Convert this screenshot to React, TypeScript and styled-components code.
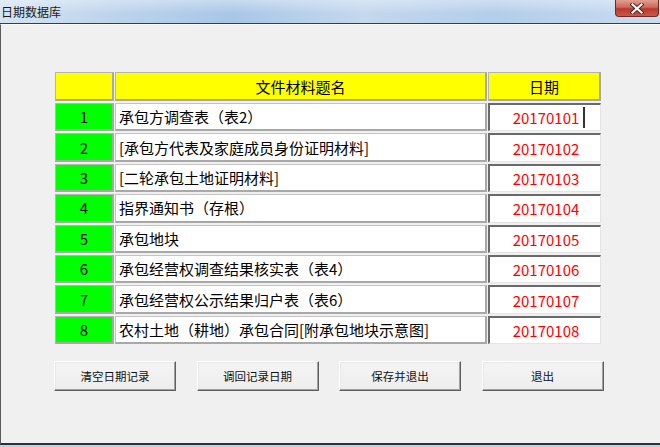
import React from 'react'
import styled, { createGlobalStyle } from 'styled-components'

const GlobalStyle = createGlobalStyle`
  html, body {
    margin: 0;
    padding: 0;
    background: #f0f0f0;
    overflow: hidden;
  }
  body {
    font-family: "Noto Sans CJK SC", "Noto Sans", sans-serif;
  }
`

const rows = [
  { no: 1, name: '承包方调查表（表2）', date: '20170101' },
  { no: 2, name: '[承包方代表及家庭成员身份证明材料]', date: '20170102' },
  { no: 3, name: '[二轮承包土地证明材料]', date: '20170103' },
  { no: 4, name: '指界通知书（存根）', date: '20170104' },
  { no: 5, name: '承包地块', date: '20170105' },
  { no: 6, name: '承包经营权调查结果核实表（表4）', date: '20170106' },
  { no: 7, name: '承包经营权公示结果归户表（表6）', date: '20170107' },
  { no: 8, name: '农村土地（耕地）承包合同[附承包地块示意图]', date: '20170108' },
]

const buttons = ['清空日期记录', '调回记录日期', '保存并退出', '退出']

export default function App() {
  return (
    <>
      <GlobalStyle />
      <Window>
        <TitleBar>
          <Title>日期数据库</Title>
          <CloseButton>
            <svg width="14" height="11" viewBox="0 0 14 11">
              <path d="M2.5 1.5 L11.5 9.5 M11.5 1.5 L2.5 9.5" stroke="#4a2020" strokeWidth="4" strokeLinecap="square" />
              <path d="M2.5 1.5 L11.5 9.5 M11.5 1.5 L2.5 9.5" stroke="#ffffff" strokeWidth="2.2" strokeLinecap="square" />
            </svg>
          </CloseButton>
        </TitleBar>
        <Client>
          <Table>
            <HeadCell />
            <HeadCell>文件材料题名</HeadCell>
            <HeadCell>日期</HeadCell>
            {rows.map(r => (
              <React.Fragment key={r.no}>
                <NoCell>{r.no}</NoCell>
                <NameCell>{r.name}</NameCell>
                <DateCell>
                  {r.date}
                  {r.no === 1 && <Caret />}
                </DateCell>
              </React.Fragment>
            ))}
          </Table>
          <ButtonRow>
            {buttons.map(b => (
              <Button key={b}>{b}</Button>
            ))}
          </ButtonRow>
        </Client>
        <BottomFrame />
      </Window>
    </>
  )
}

const Window = styled.div`
  width: 660px;
  height: 447px;
  display: flex;
  flex-direction: column;
  background: #f0f0f0;
`

const TitleBar = styled.div`
  height: 23px;
  flex: none;
  display: flex;
  align-items: flex-start;
  justify-content: space-between;
  background:
    linear-gradient(180deg, rgba(255, 255, 255, 0.35), rgba(255, 255, 255, 0) 60%),
    linear-gradient(90deg, #d4e3f3 0%, #bcd3ec 18%, #a9c6e6 35%, #c4d8ee 55%, #b3cdea 75%, #c9dcf1 100%);
  border-bottom: 1px solid #3c3c3c;
`

const Title = styled.span`
  font-size: 12px;
  line-height: 23px;
  color: #1a1a1a;
  padding-left: 1px;
`

const CloseButton = styled.div`
  width: 42px;
  height: 16px;
  margin-right: 1px;
  display: flex;
  align-items: center;
  justify-content: center;
  background: linear-gradient(180deg, #e2a08f 0%, #d0675a 45%, #b9392c 55%, #c9584a 100%);
  border: 1px solid #6e2a22;
  border-top: none;
  border-radius: 0 0 4px 4px;
`

const Client = styled.div`
  flex: 1;
  display: flex;
  flex-direction: column;
  padding: 47px 0 0 53px;
  border-left: 1px solid #5a5a5a;
  border-top: 1px solid #ffffff;
  border-bottom: 2px solid #2f2f2f;
`

const Table = styled.div`
  display: grid;
  grid-template-columns: 59px 372px 113px;
  grid-template-rows: 29px repeat(8, 28.4px);
  column-gap: 1px;
  row-gap: 2px;
  margin-left: 1px;
  width: 546px;
`

const cellBase = `
  box-sizing: border-box;
  display: flex;
  align-items: center;
  font-size: 15px;
  white-space: nowrap;
  overflow: hidden;
`

const HeadCell = styled.div`
  ${cellBase}
  justify-content: center;
  background: #ffff00;
  color: #000;
  border: 1px solid #b4b4b4;
  border-right: 2px solid #a8a8a8;
  border-bottom: 2px solid #a8a8a8;
  padding-top: 1px;
`

const NoCell = styled.div`
  ${cellBase}
  justify-content: center;
  background: #00ff00;
  color: #000;
  border: 1px solid #b4b4b4;
  border-right: 2px solid #a8a8a8;
  border-bottom: 2px solid #a8a8a8;
`

const NameCell = styled.div`
  ${cellBase}
  background: #ffffff;
  color: #000;
  padding-left: 3px;
  border: 1px solid #c4c4c4;
  border-right: 2px solid #a8a8a8;
  border-bottom: 2px solid #a8a8a8;
`

const DateCell = styled.div`
  ${cellBase}
  position: relative;
  justify-content: center;
  padding-left: 2px;
  background: #ffffff;
  color: #ff0000;
  border-top: 2px solid #6a6a6a;
  border-left: 2px solid #6a6a6a;
  border-right: 1px solid #e4e4e4;
  border-bottom: 1px solid #e4e4e4;
`

const Caret = styled.span`
  position: absolute;
  left: 93px;
  top: 2px;
  width: 2px;
  height: 21px;
  background: #333;
`

const ButtonRow = styled.div`
  display: flex;
  gap: 20.5px;
  margin-top: 17px;
`

const Button = styled.button`
  box-sizing: border-box;
  width: 122px;
  height: 30px;
  padding: 0;
  font-family: "Noto Sans CJK SC", "Noto Sans", sans-serif;
  font-size: 11.5px;
  color: #111;
  background: linear-gradient(180deg, #f4f4f4 0%, #ededed 100%);
  border: 1px solid;
  border-color: #ffffff #5f5f5f #5f5f5f #ffffff;
  box-shadow: inset -1px -1px 0 #a0a0a0, inset 1px 1px 0 #e8e8e8;
`

const BottomFrame = styled.div`
  height: 2px;
  flex: none;
  background: #bcd2ec;
`
